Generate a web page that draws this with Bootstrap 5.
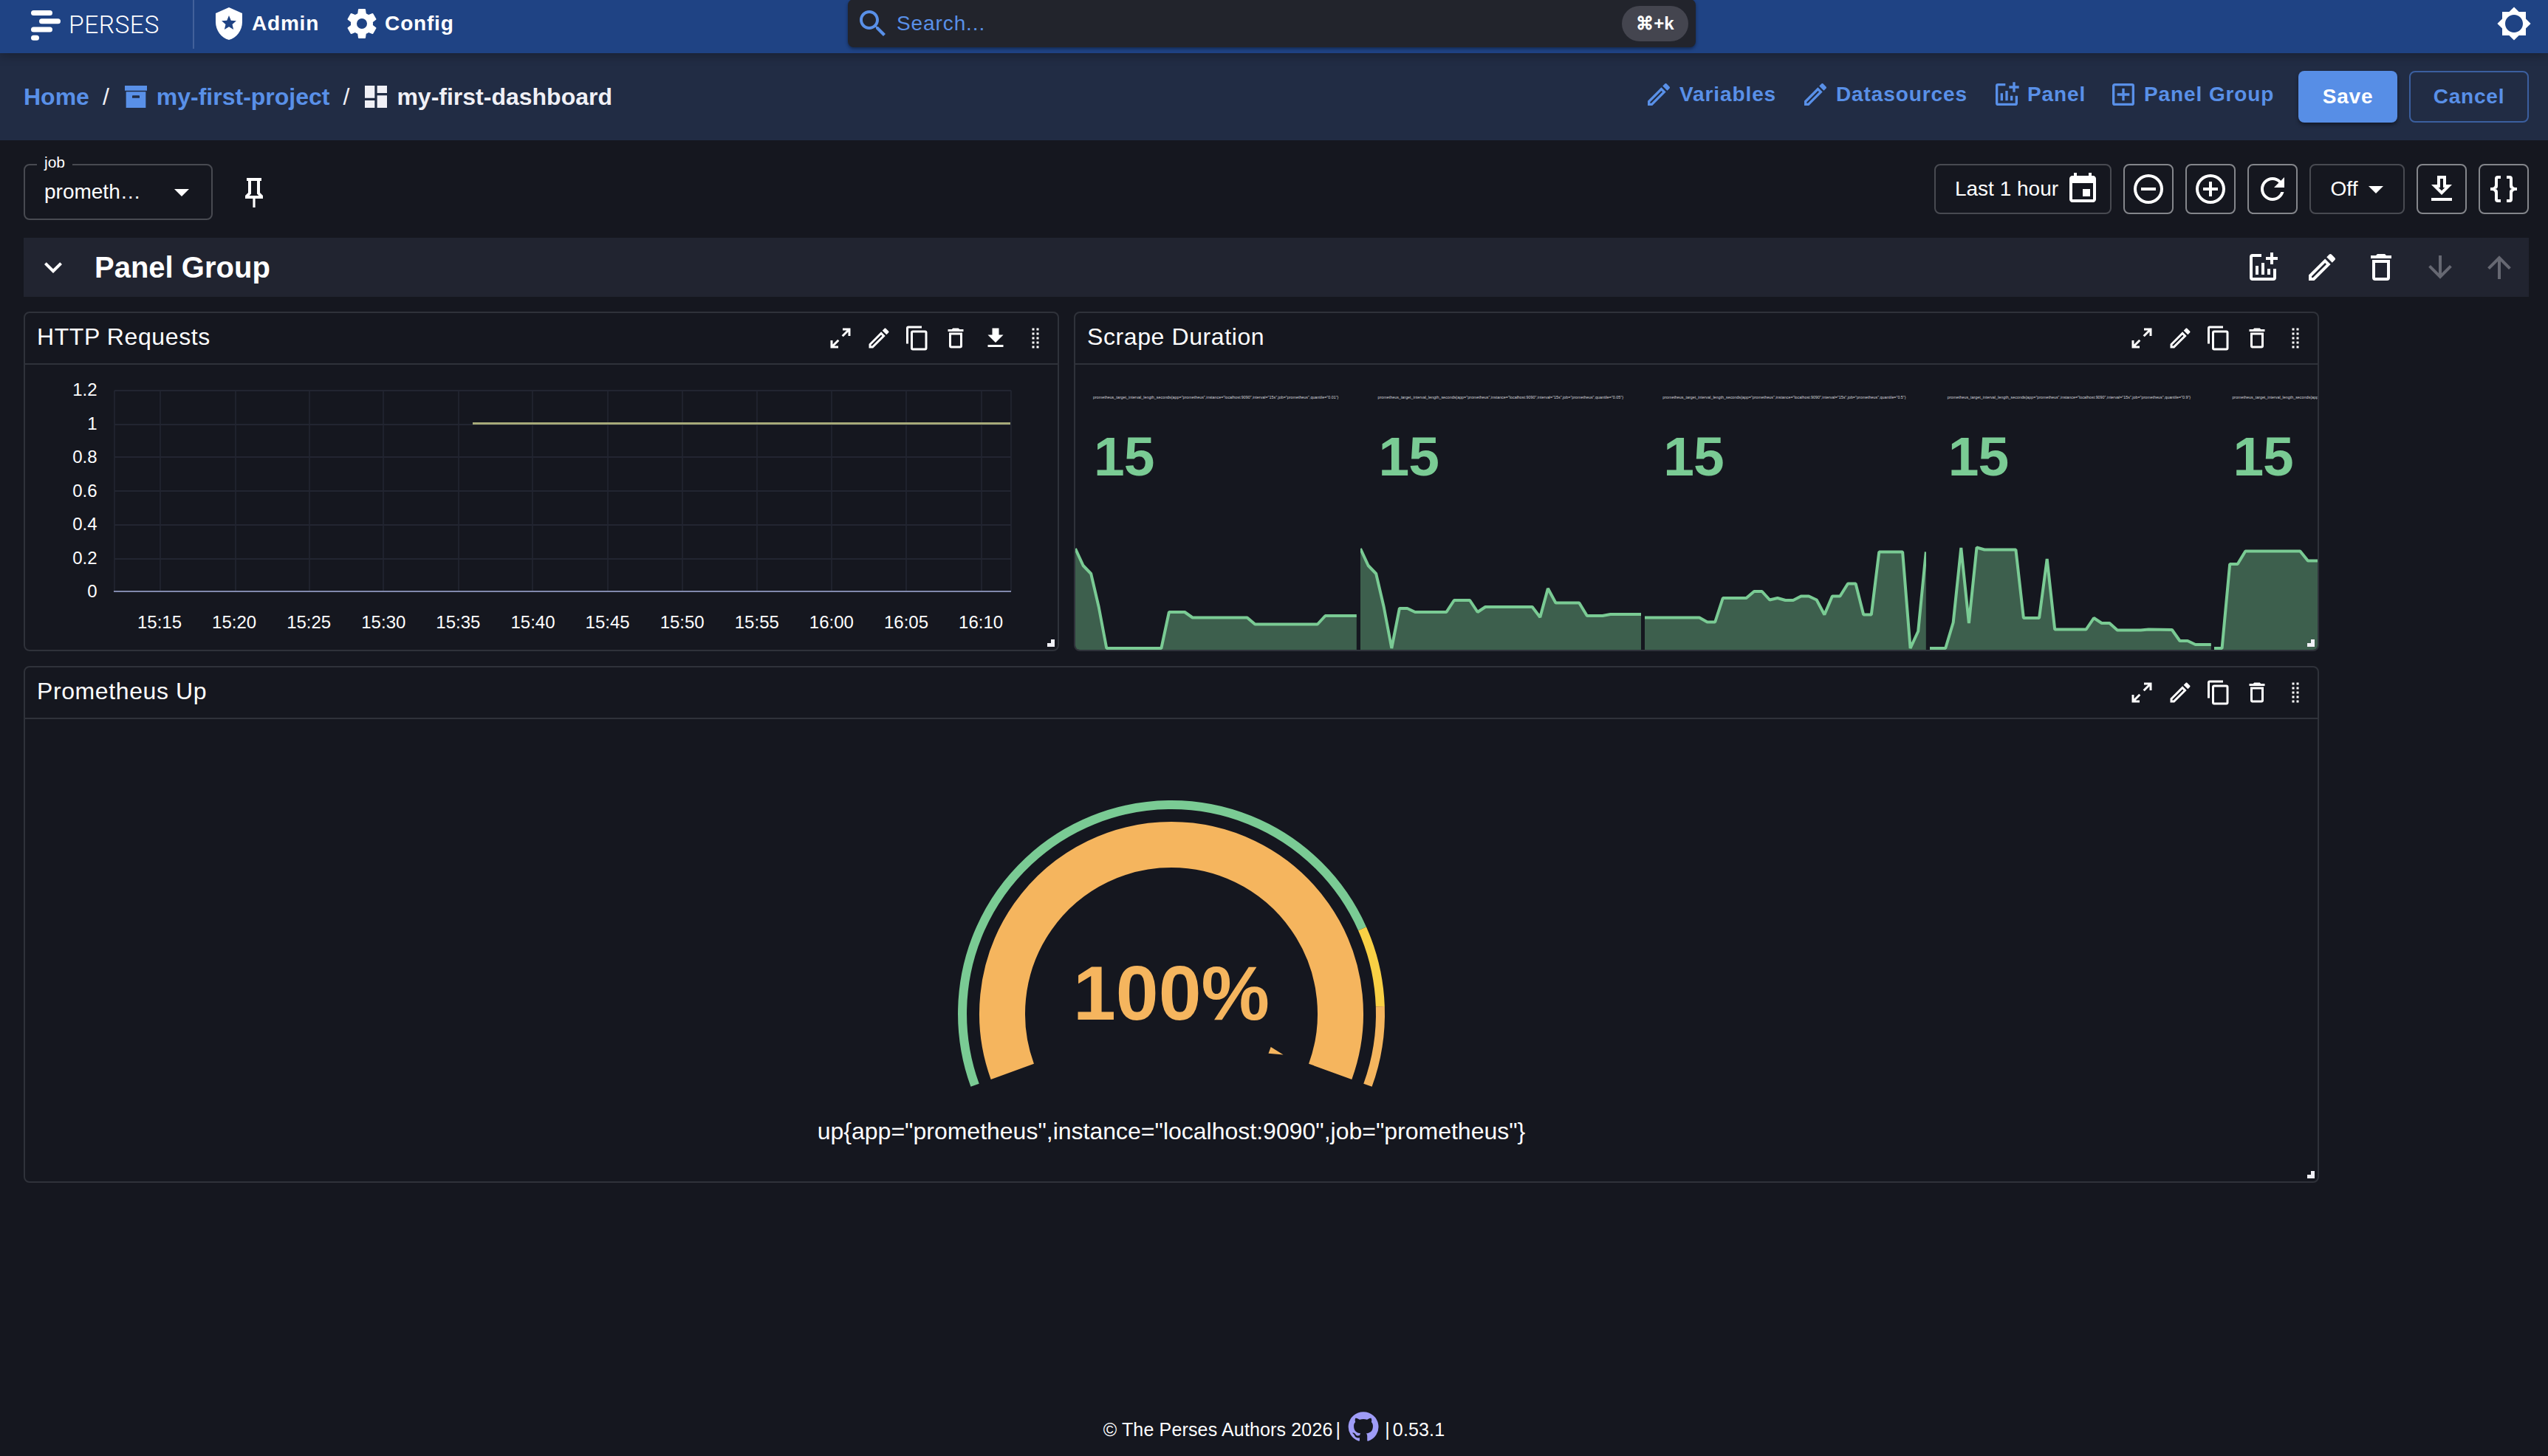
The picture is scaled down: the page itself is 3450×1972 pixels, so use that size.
<!DOCTYPE html>
<html lang="en" data-bs-theme="dark">
<head>
  <meta charset="UTF-8" />
  <meta name="viewport" content="width=device-width, initial-scale=1" />
  <title>my-first-dashboard - Perses</title>

  <!-- Bootstrap CSS -->
  <link href="https://cdn.jsdelivr.net/npm/bootstrap@5.3.3/dist/css/bootstrap.min.css" rel="stylesheet" />

  <style>
    body {
      background-color: #15171f;
      color: #fff;
      font-family: "Liberation Sans", Arial, sans-serif;
      font-size: 28px;
      line-height: 1.2;
      min-height: 100vh;
      overflow: hidden;
    }

    svg {
      display: block;
      flex-shrink: 0;
      fill: currentColor;
    }

    .ic-lg { width: 48px; height: 48px; }
    .ic-md { width: 40px; height: 40px; }
    .ic-sm { width: 36px; height: 36px; }
    .ic-gh { width: 44px; height: 44px; margin: 0 7px 9px 9px; }

    a { text-decoration: none; }

    /* top bar */
    .topbar {
      height: 72px;
      padding: 0 22px 8px 42px;
      background: #1f4384;
      box-shadow: 0 2px 14px rgba(0, 0, 0, .3);
      z-index: 5;
    }

    .brand-link { width: 219px; height: 68px; padding-top: 4px; color: #fff; }
    .brand-logo { width: 40px; height: 41px; }

    .brand-name {
      font-family: Roboto, sans-serif;
      font-weight: 300;
      font-size: 33.5px;
      letter-spacing: .5px;
      margin: 1px 0 0 11px;
    }

    .topbar-rule { width: 2px; height: 68px; margin-right: 23px; background: #42619a; }

    .top-link {
      color: #fff;
      font-weight: bold;
      letter-spacing: .8px;
      gap: 7px;
      margin-right: 34px;
    }

    .top-left { width: 1106px; }

    .search-box {
      width: 1148px;
      height: 65px;
      margin-top: -1px;
      padding: 1px 10px 0;
      background: #22242c;
      color: #5990e8;
      border-radius: 8px;
      box-shadow: 0 2px 4px rgba(0, 0, 0, .4);
    }

    .search-text { margin-left: 8px; letter-spacing: .9px; }

    .key-chip {
      width: 90px;
      height: 48px;
      border-radius: 24px;
      background: #44454f;
      color: #fff;
      font-size: 24px;
      font-weight: bold;
    }

    /* breadcrumbs and edit actions */
    .subbar { height: 118px; padding: 0 26px 0 32px; background: #212c44; }
    .crumbs { font-size: 32px; }
    .crumbs a, .crumb-here { font-weight: bold; }
    .crumbs a { color: #5990e8; }
    .crumbs .crumb-sep { margin: 0 16px 0 18px; color: #f0f0f6; }
    .crumbs svg { margin-right: 8px; }
    .crumb-here { color: #f0f0f6; }

    .edit-link {
      color: #5990e8;
      font-weight: bold;
      letter-spacing: .9px;
      gap: 8px;
      margin-bottom: 6px;
    }

    .w-vars { width: 212px; }
    .w-data { width: 259px; }
    .w-panel { width: 158px; }
    .w-group { width: 257px; }

    .edit-btn {
      height: 70px;
      padding: 0;
      font-size: 28px;
      font-weight: bold;
      letter-spacing: .8px;
      border-radius: 8px;
    }

    .btn-save { width: 134px; background: #578ee6; color: #fff; box-shadow: 0 3px 5px rgba(0, 0, 0, .4); }
    .btn-cancel { width: 162px; margin-left: 16px; color: #5990e8; border: 2px solid #3b5f9f; }

    /* variables and time controls */
    .controls { height: 132px; padding: 32px 26px 0 32px; }

    .var-select {
      width: 256px;
      height: 76px;
      padding: 0 16px 0 26px;
      border: 2px solid #484a51;
      border-radius: 8px;
    }

    .var-label {
      position: absolute;
      top: -17px;
      left: 16px;
      padding: 0 10px;
      background: #15171f;
      font-size: 21px;
      line-height: 26px;
    }

    .pin-icon { margin: 15px 0 0 32px; }

    .ctl {
      height: 68px;
      border: 2px solid #84868b;
      border-radius: 8px;
    }

    .ctl-icon { width: 68px; }
    .ctl-dim { border-color: #484a51; }
    .ctl-range { width: 240px; gap: 9px; padding-left: 13px; }
    .ctl-off { width: 129px; gap: 1px; padding-left: 14px; }

    /* panel group */
    .group-bar {
      height: 80px;
      margin: 0 26px 20px 32px;
      padding: 0 16px;
      background: #212430;
    }

    .group-title { font-size: 40px; font-weight: bold; margin-left: 32px; }
    .group-tools { gap: 32px; }
    .is-off { color: #666872; }

    .panels {
      display: grid;
      grid-template-columns: 1402px 1686px;
      grid-template-rows: 460px 700px;
      gap: 20px;
      margin-left: 32px;
    }

    .panel-box {
      border: 2px solid #2f323a;
      border-radius: 8px;
      overflow: hidden;
    }

    .panel-wide { grid-column: 1 / 3; }

    .panel-head {
      height: 70px;
      padding: 0 12px 0 16px;
      border-bottom: 2px solid #2f323a;
    }

    .panel-name { font-size: 32px; letter-spacing: .6px; padding-bottom: 4px; }
    .panel-tools { gap: 16px; }
    .w-dl { width: 40px; }

    .grip {
      position: absolute;
      right: 4px;
      bottom: 4px;
      width: 10px;
      height: 10px;
      border-right: 5px solid #f0f0f6;
      border-bottom: 5px solid #f0f0f6;
    }

    /* stat cells */
    .stats { gap: 4.8px; height: 386px; }
    .stat-cell { flex: 0 0 380.8px; width: 380.8px; }
    .stat-label { font-size: 5.37px; line-height: 8px; color: #d4d4da; margin: 40px 0 0 24px; white-space: nowrap; }
    .stat-value { font-size: 75px; line-height: 76px; font-weight: bold; color: #7acb94; margin: 38px 0 0 25px; letter-spacing: -1px; }

    .chart-text text { fill: #fff; font-size: 24px; }

    footer { height: 72px; font-size: 25px; letter-spacing: .15px; }
  </style>
</head>
<body class="d-flex flex-column">

  <!-- icon shapes -->
  <svg class="d-none" xmlns="http://www.w3.org/2000/svg">
    <symbol id="shield" viewBox="0 0 24 24"><path d="M12,1L3,5V11C3,16.55 6.84,21.74 12,23C17.16,21.74 21,16.55 21,11V5L12,1M15.08,16L12,14.15L8.93,16L9.74,12.5L7.03,10.16L10.61,9.85L12,6.55L13.39,9.84L16.97,10.15L14.26,12.5L15.08,16Z"/></symbol>
    <symbol id="cog" viewBox="0 0 24 24"><path d="M12,15.5A3.5,3.5 0 0,1 8.5,12A3.5,3.5 0 0,1 12,8.5A3.5,3.5 0 0,1 15.5,12A3.5,3.5 0 0,1 12,15.5M19.43,12.97C19.47,12.65 19.5,12.33 19.5,12C19.5,11.67 19.47,11.34 19.43,11L21.54,9.37C21.73,9.22 21.78,8.95 21.66,8.73L19.66,5.27C19.54,5.05 19.27,4.96 19.05,5.05L16.56,6.05C16.04,5.66 15.5,5.32 14.87,5.07L14.5,2.42C14.46,2.18 14.25,2 14,2H10C9.75,2 9.54,2.18 9.5,2.42L9.13,5.07C8.5,5.32 7.96,5.66 7.44,6.05L4.95,5.05C4.73,4.96 4.46,5.05 4.34,5.27L2.34,8.73C2.21,8.95 2.27,9.22 2.46,9.37L4.57,11C4.53,11.34 4.5,11.67 4.5,12C4.5,12.33 4.53,12.65 4.57,12.97L2.46,14.63C2.27,14.78 2.21,15.05 2.34,15.27L4.34,18.73C4.46,18.95 4.73,19.03 4.95,18.95L7.44,17.94C7.96,18.34 8.5,18.68 9.13,18.93L9.5,21.58C9.54,21.82 9.75,22 10,22H14C14.25,22 14.46,21.82 14.5,21.58L14.87,18.93C15.5,18.67 16.04,18.34 16.56,17.94L19.05,18.95C19.27,19.03 19.54,18.95 19.66,18.73L21.66,15.27C21.78,15.05 21.73,14.78 21.54,14.63L19.43,12.97Z"/></symbol>
    <symbol id="search" viewBox="0 0 24 24"><path d="M15.5 14h-.79l-.28-.27C15.41 12.59 16 11.11 16 9.5 16 5.91 13.09 3 9.5 3S3 5.91 3 9.5 5.91 16 9.5 16c1.61 0 3.09-.59 4.23-1.57l.27.28v.79l5 4.99L20.49 19zm-6 0C7.01 14 5 11.99 5 9.5S7.01 5 9.5 5 14 7.01 14 9.5 11.99 14 9.5 14"/></symbol>
    <symbol id="sun" viewBox="0 0 24 24"><path d="M20 15.31 23.31 12 20 8.69V4h-4.69L12 .69 8.69 4H4v4.69L.69 12 4 15.31V20h4.69L12 23.31 15.31 20H20zM12 18c-3.31 0-6-2.69-6-6s2.69-6 6-6 6 2.69 6 6-2.69 6-6 6"/></symbol>
    <symbol id="archive" viewBox="0 0 24 24"><path d="M3,3H21V7H3V3M4,8H20V21H4V8M9.5,11A0.5,0.5 0 0,0 9,11.5V13H15V11.5A0.5,0.5 0 0,0 14.5,11H9.5Z"/></symbol>
    <symbol id="board" viewBox="0 0 24 24"><path d="M13,3V9H21V3M13,21H21V11H13M3,21H11V15H3M3,13H11V3H3V13Z"/></symbol>
    <symbol id="pencil" viewBox="0 0 24 24"><path d="M14.06,9L15,9.94L5.92,19H5V18.08L14.06,9M17.66,3C17.41,3 17.15,3.1 16.96,3.29L15.13,5.12L18.88,8.87L20.71,7.04C21.1,6.65 21.1,6 20.71,5.63L18.37,3.29C18.17,3.09 17.92,3 17.66,3M14.06,6.19L3,17.25V21H6.75L17.81,9.94L14.06,6.19Z"/></symbol>
    <symbol id="chart-plus" viewBox="0 0 24 24"><path d="M5 3h6v2H5v14h14v-6h2v6a2 2 0 0 1-2 2H5a2 2 0 0 1-2-2V5a2 2 0 0 1 2-2zM7 11h2v6H7zM11 9h2v8h-2zM15 13h2v4h-2zM17 2h2v3h3v2h-3v3h-2V7h-3V5h3z"/></symbol>
    <symbol id="plus-box" viewBox="0 0 24 24"><path d="M19,19V5H5V19H19M19,3A2,2 0 0,1 21,5V19A2,2 0 0,1 19,21H5A2,2 0 0,1 3,19V5C3,3.89 3.9,3 5,3H19M11,7H13V11H17V13H13V17H11V13H7V11H11V7Z"/></symbol>
    <symbol id="caret" viewBox="0 0 24 24"><path d="m7 10 5 5 5-5z"/></symbol>
    <symbol id="pin" viewBox="0 0 24 24"><path d="M16,12V4H17V2H7V4H8V12L6,14V16H11.2V22H12.8V16H18V14L16,12M8.8,14L10,12.8V4H14V12.8L15.2,14H8.8Z"/></symbol>
    <symbol id="calendar" viewBox="0 0 24 24"><path d="M17 12h-5v5h5zM16 1v2H8V1H6v2H5c-1.11 0-1.99.9-1.99 2L3 19c0 1.1.89 2 2 2h14c1.1 0 2-.9 2-2V5c0-1.1-.9-2-2-2h-1V1zm3 18H5V8h14z"/></symbol>
    <symbol id="minus-circle" viewBox="0 0 24 24"><path d="M12,20C7.59,20 4,16.41 4,12C4,7.59 7.59,4 12,4C16.41,4 20,7.59 20,12C20,16.41 16.41,20 12,20M12,2A10,10 0 0,0 2,12A10,10 0 0,0 12,22A10,10 0 0,0 22,12A10,10 0 0,0 12,2M7,13H17V11H7"/></symbol>
    <symbol id="plus-circle" viewBox="0 0 24 24"><path d="M12,20C7.59,20 4,16.41 4,12C4,7.59 7.59,4 12,4C16.41,4 20,7.59 20,12C20,16.41 16.41,20 12,20M12,2A10,10 0 0,0 2,12A10,10 0 0,0 12,22A10,10 0 0,0 22,12A10,10 0 0,0 12,2M13,7H11V11H7V13H11V17H13V13H17V11H13V7Z"/></symbol>
    <symbol id="refresh" viewBox="0 0 24 24"><path d="M17.65,6.35C16.2,4.9 14.21,4 12,4A8,8 0 0,0 4,12A8,8 0 0,0 12,20C15.73,20 18.84,17.45 19.73,14H17.65C16.83,16.33 14.61,18 12,18A6,6 0 0,1 6,12A6,6 0 0,1 12,6C13.66,6 15.14,6.69 16.22,7.78L13,11H20V4L17.65,6.35Z"/></symbol>
    <symbol id="download-o" viewBox="0 0 24 24"><path d="M13,5V11H14.17L12,13.17L9.83,11H11V5H13M15,3H9V9H5L12,16L19,9H15V3M19,18H5V20H19V18Z"/></symbol>
    <symbol id="download" viewBox="0 0 24 24"><path d="M5,20H19V18H5M19,9H15V3H9V9H5L12,16L19,9Z"/></symbol>
    <symbol id="braces" viewBox="0 0 24 24"><path d="M8,3A2,2 0 0,0 6,5V9A2,2 0 0,1 4,11H3V13H4A2,2 0 0,1 6,15V19A2,2 0 0,0 8,21H10V19H8V14A2,2 0 0,0 6,12A2,2 0 0,0 8,10V5H10V3M16,3A2,2 0 0,1 18,5V9A2,2 0 0,0 20,11H21V13H20A2,2 0 0,0 18,15V19A2,2 0 0,1 16,21H14V19H16V14A2,2 0 0,1 18,12A2,2 0 0,1 16,10V5H14V3H16Z"/></symbol>
    <symbol id="chevron" viewBox="0 0 24 24"><path d="M7.41,8.58L12,13.17L16.59,8.58L18,10L12,16L6,10L7.41,8.58Z"/></symbol>
    <symbol id="trash" viewBox="0 0 24 24"><path d="M6,19A2,2 0 0,0 8,21H16A2,2 0 0,0 18,19V7H6V19M8,9H16V19H8V9M15.5,4L14.5,3H9.5L8.5,4H5V6H19V4H15.5Z"/></symbol>
    <symbol id="arrow-down" viewBox="0 0 24 24"><path d="M11,4H13V16L18.5,10.5L19.92,11.92L12,19.84L4.08,11.92L5.5,10.5L11,16V4Z"/></symbol>
    <symbol id="arrow-up" viewBox="0 0 24 24"><path d="M13,20H11V8L5.5,13.5L4.08,12.08L12,4.16L19.92,12.08L18.5,13.5L13,8V20Z"/></symbol>
    <symbol id="expand" viewBox="0 0 24 24"><path d="M10,21V19H6.41L10.91,14.5L9.5,13.09L5,17.59V14H3V21H10M14.5,10.91L19,6.41V10H21V3H14V5H17.59L13.09,9.5L14.5,10.91Z"/></symbol>
    <symbol id="copy" viewBox="0 0 24 24"><path d="M19,21H8V7H19M19,5H8A2,2 0 0,0 6,7V21A2,2 0 0,0 8,23H19A2,2 0 0,0 21,21V7A2,2 0 0,0 19,5M16,1H4A2,2 0 0,0 2,3V17H4V3H16V1Z"/></symbol>
    <symbol id="drag" viewBox="0 0 24 24"><path d="M9 3h2v2H9zM13 3h2v2h-2zM9 7h2v2H9zM13 7h2v2h-2zM9 11h2v2H9zM13 11h2v2h-2zM9 15h2v2H9zM13 15h2v2h-2zM9 19h2v2H9zM13 19h2v2h-2z"/></symbol>
    <symbol id="github" viewBox="0 0 24 24"><path d="M12 1.27a11 11 0 00-3.48 21.46c.55.09.73-.28.73-.55v-1.84c-3.03.64-3.67-1.46-3.67-1.46-.55-1.29-1.28-1.65-1.28-1.65-.92-.65.1-.65.1-.65 1.1 0 1.73 1.1 1.73 1.1.92 1.65 2.57 1.2 3.21.92a2 2 0 01.64-1.47c-2.47-.27-5.04-1.19-5.04-5.5 0-1.1.46-2.1 1.2-2.84a3.76 3.76 0 010-2.93s.91-.28 3.11 1.1c1.8-.49 3.7-.49 5.5 0 2.1-1.38 3.02-1.1 3.02-1.1a3.76 3.76 0 01.1 2.93c.83.74 1.2 1.74 1.2 2.94 0 4.21-2.57 5.13-5.04 5.4.45.37.82.92.82 2.02v3.03c0 .27.1.64.73.55A11 11 0 0012 1.27"/></symbol>
  </svg>

  <header class="topbar d-flex position-relative">
    <div class="top-left d-flex align-items-center">
      <a class="brand-link d-flex align-items-center" href="#">
        <svg class="brand-logo" viewBox="0 0 40 41">
          <rect x="0" y="0" width="29" height="7" rx="3.5"/>
          <rect x="11" y="11.3" width="29" height="7" rx="3.5"/>
          <rect x="0" y="22.6" width="29" height="7" rx="3.5"/>
          <rect x="0" y="33.8" width="11" height="7" rx="3.5"/>
        </svg>
        <span class="brand-name">PERSES</span>
      </a>
      <div class="topbar-rule"></div>
      <a class="top-link d-flex align-items-center" href="#"><svg class="ic-lg"><use href="#shield"/></svg>Admin</a>
      <a class="top-link d-flex align-items-center" href="#"><svg class="ic-lg"><use href="#cog"/></svg>Config</a>
    </div>
    <div class="search-box d-flex align-items-center">
      <svg class="ic-lg"><use href="#search"/></svg>
      <span class="search-text">Search...</span>
      <span class="key-chip d-flex align-items-center justify-content-center ms-auto">⌘+k</span>
    </div>
    <div class="d-flex align-items-center ms-auto"><svg class="ic-lg"><use href="#sun"/></svg></div>
  </header>

  <div class="subbar d-flex align-items-center">
    <nav class="crumbs d-flex align-items-center">
      <a href="#">Home</a>
      <span class="crumb-sep">/</span>
      <a class="d-flex align-items-center" href="#"><svg class="ic-md"><use href="#archive"/></svg>my-first-project</a>
      <span class="crumb-sep">/</span>
      <span class="crumb-here d-flex align-items-center"><svg class="ic-md"><use href="#board"/></svg>my-first-dashboard</span>
    </nav>
    <div class="d-flex align-items-center ms-auto">
      <a class="edit-link w-vars d-flex align-items-center" href="#"><svg class="ic-md"><use href="#pencil"/></svg>Variables</a>
      <a class="edit-link w-data d-flex align-items-center" href="#"><svg class="ic-md"><use href="#pencil"/></svg>Datasources</a>
      <a class="edit-link w-panel d-flex align-items-center" href="#"><svg class="ic-md"><use href="#chart-plus"/></svg>Panel</a>
      <a class="edit-link w-group d-flex align-items-center text-nowrap" href="#"><svg class="ic-md"><use href="#plus-box"/></svg>Panel Group</a>
      <button class="btn edit-btn btn-save" type="button">Save</button>
      <button class="btn edit-btn btn-cancel" type="button">Cancel</button>
    </div>
  </div>

  <div class="controls d-flex align-items-start">
    <div class="var-select position-relative d-flex align-items-center justify-content-between">
      <span class="var-label">job</span>
      <span>prometh…</span>
      <svg class="ic-lg"><use href="#caret"/></svg>
    </div>
    <svg class="ic-lg pin-icon"><use href="#pin"/></svg>
    <div class="d-flex gap-3 ms-auto">
      <div class="ctl ctl-dim ctl-range d-flex align-items-center justify-content-center">Last 1 hour<svg class="ic-lg"><use href="#calendar"/></svg></div>
      <div class="ctl ctl-icon d-flex align-items-center justify-content-center"><svg class="ic-lg"><use href="#minus-circle"/></svg></div>
      <div class="ctl ctl-icon d-flex align-items-center justify-content-center"><svg class="ic-lg"><use href="#plus-circle"/></svg></div>
      <div class="ctl ctl-icon d-flex align-items-center justify-content-center"><svg class="ic-lg"><use href="#refresh"/></svg></div>
      <div class="ctl ctl-dim ctl-off d-flex align-items-center justify-content-center">Off<svg class="ic-lg"><use href="#caret"/></svg></div>
      <div class="ctl ctl-icon d-flex align-items-center justify-content-center"><svg class="ic-lg"><use href="#download-o"/></svg></div>
      <div class="ctl ctl-icon d-flex align-items-center justify-content-center"><svg class="ic-lg"><use href="#braces"/></svg></div>
    </div>
  </div>

  <div class="group-bar d-flex align-items-center">
    <svg class="ic-lg"><use href="#chevron"/></svg>
    <span class="group-title">Panel Group</span>
    <div class="group-tools d-flex ms-auto">
      <svg class="ic-lg"><use href="#chart-plus"/></svg>
      <svg class="ic-lg"><use href="#pencil"/></svg>
      <svg class="ic-lg"><use href="#trash"/></svg>
      <svg class="ic-lg is-off"><use href="#arrow-down"/></svg>
      <svg class="ic-lg is-off"><use href="#arrow-up"/></svg>
    </div>
  </div>

  <main class="panels">
    <section class="panel-box position-relative">
      <div class="panel-head d-flex align-items-center justify-content-between">
        <span class="panel-name">HTTP Requests</span>
        <div class="panel-tools d-flex">
          <svg class="ic-sm"><use href="#expand"/></svg>
          <svg class="ic-sm"><use href="#pencil"/></svg>
          <svg class="ic-sm"><use href="#copy"/></svg>
          <svg class="ic-sm"><use href="#trash"/></svg>
          <svg class="ic-sm w-dl"><use href="#download"/></svg>
          <svg class="ic-sm"><use href="#drag"/></svg>
        </div>
      </div>
      <svg id="requestsChart" class="chart-text" width="1398" height="386" viewBox="0 0 1398 386"></svg>
      <span class="grip"></span>
    </section>

    <section class="panel-box position-relative">
      <div class="panel-head d-flex align-items-center justify-content-between">
        <span class="panel-name">Scrape Duration</span>
        <div class="panel-tools d-flex">
          <svg class="ic-sm"><use href="#expand"/></svg>
          <svg class="ic-sm"><use href="#pencil"/></svg>
          <svg class="ic-sm"><use href="#copy"/></svg>
          <svg class="ic-sm"><use href="#trash"/></svg>
          <svg class="ic-sm"><use href="#drag"/></svg>
        </div>
      </div>
      <div id="stats" class="stats d-flex"></div>
      <span class="grip"></span>
    </section>

    <section class="panel-box panel-wide position-relative">
      <div class="panel-head d-flex align-items-center justify-content-between">
        <span class="panel-name">Prometheus Up</span>
        <div class="panel-tools d-flex">
          <svg class="ic-sm"><use href="#expand"/></svg>
          <svg class="ic-sm"><use href="#pencil"/></svg>
          <svg class="ic-sm"><use href="#copy"/></svg>
          <svg class="ic-sm"><use href="#trash"/></svg>
          <svg class="ic-sm"><use href="#drag"/></svg>
        </div>
      </div>
      <svg id="gauge" width="3104" height="626" viewBox="0 0 3104 626"></svg>
      <span class="grip"></span>
    </section>
  </main>

  <footer class="d-flex align-items-center justify-content-center mt-auto">
    <span>© The Perses Authors 2026</span>
    <span class="ms-1">|</span>
    <svg class="ic-gh" color="#9f9cf7"><use href="#github"/></svg>
    <span class="me-1">|</span>
    <span>0.53.1</span>
  </footer>

  <!-- Bootstrap JS Bundle -->
  <script src="https://cdn.jsdelivr.net/npm/bootstrap@5.3.3/dist/js/bootstrap.bundle.min.js"></script>

  <script>
    // time series panel
    function drawRequests() {
      const left = 121, right = 1335, top = 35, bottom = 307;
      const xs = [183, 285, 385, 485, 587, 687, 789, 890, 991, 1092, 1193, 1295];
      const times = ['15:15', '15:20', '15:25', '15:30', '15:35', '15:40', '15:45', '15:50', '15:55', '16:00', '16:05', '16:10'];
      const rows = [[35, '1.2'], [81, '1'], [125, '0.8'], [171, '0.6'], [217, '0.4'], [263, '0.2'], [307, '0']];
      let out = '';

      [left, ...xs, right].forEach(x => {
        out += `<path d="M${x} ${top}V${bottom}" stroke="#1f222d" stroke-width="2"/>`;
      });
      rows.forEach(([y, label], i) => {
        if (label !== '0') out += `<path d="M${left} ${y}H${right}" stroke="#222531" stroke-width="2"/>`;
        out += `<text x="97.5" y="${35 + i * 45.5 + 7}" text-anchor="end">${label}</text>`;
      });
      times.forEach((t, i) => {
        out += `<text x="${182 + i * 101.1}" y="357" text-anchor="middle">${t}</text>`;
      });
      out += `<path d="M120 ${bottom}H1335" stroke="#8189ad" stroke-width="2"/>`;
      out += `<path d="M606 79.5H1334" stroke="#a7aa79" stroke-width="3"/>`;
      document.getElementById('requestsChart').innerHTML = out;
    }

    // each series is a list of [sample index, y], 37 samples per cell
    const series = [
      { q: '0.01', pts: [[0, 9], [1, 32], [2, 43], [3, 88], [4, 144], [11, 144], [12, 95], [14, 95], [15, 102.5], [22, 102.5], [23, 111.5], [31, 111.5], [32, 100], [36, 100]] },
      { q: '0.05', pts: [[0, 9], [1, 32], [2, 43], [3, 88], [4, 144], [5, 90], [6, 90], [7, 95], [11, 95], [12, 79], [14, 79], [15, 95], [16, 88], [22, 88], [23, 102], [24, 63], [25, 82.5], [28, 82.5], [29, 100], [31, 100], [32, 98], [36, 98]] },
      { q: '0.5', pts: [[0, 102.5], [7, 102.5], [8, 108.5], [9, 108.5], [10, 76], [13, 76], [14, 67], [15, 67], [16, 78.5], [17, 76], [18, 79], [19, 79], [20, 73.5], [21, 73.5], [22, 78.5], [23, 98.5], [24, 73.5], [25, 73.5], [26, 56.5], [27, 56.5], [28, 98.5], [29, 98.5], [30, 13.5], [33, 13.5], [34, 144], [35, 121], [36, 13.5]] },
      { q: '0.9', pts: [[0, 144], [2, 144], [3, 109], [4, 8], [5, 110], [6, 7.5], [7, 10.5], [11, 10.5], [12, 103], [14, 103], [15, 23], [16, 118.5], [20, 118.5], [21, 103], [22, 110], [23, 110], [24, 119.5], [27, 119.5], [28, 118.5], [31, 119], [32, 134], [33, 134], [34, 139], [36, 139]] },
      { q: '0.99', pts: [[0, 144], [1, 144], [2, 30], [3, 30], [4, 12.5], [11, 12.5], [12, 25.5], [36, 25.5]] }
    ];

    function drawStats() {
      const w = 380.8, h = 146;
      document.getElementById('stats').innerHTML = series.map(s => {
        const line = s.pts.map(([i, y]) => `${(i * w / 36).toFixed(1)},${y}`).join(' ');
        return `
          <div class="stat-cell d-flex flex-column">
            <div class="stat-label">prometheus_target_interval_length_seconds{app="prometheus",instance="localhost:9090",interval="15s",job="prometheus",quantile="${s.q}"}</div>
            <div class="stat-value">15</div>
            <svg class="mt-auto" width="${w}" height="${h}" viewBox="0 0 ${w} ${h}">
              <polygon points="0,${h} ${line} ${w},${h}" fill="#3d5f4d"/>
              <polyline points="${line}" fill="none" stroke="#7acb94" stroke-width="4" stroke-linejoin="bevel"/>
            </svg>
          </div>`;
      }).join('');
    }

    // ring segment between two angles in degrees, clockwise from a to b
    function ring(cx, cy, r, width, a, b, color) {
      const mid = r - width / 2;
      const pt = deg => {
        const t = deg * Math.PI / 180;
        return `${(cx + mid * Math.cos(t)).toFixed(2)} ${(cy - mid * Math.sin(t)).toFixed(2)}`;
      };
      const large = a - b > 180 ? 1 : 0;
      return `<path d="M${pt(a)}A${mid} ${mid} 0 ${large} 1 ${pt(b)}" fill="none" stroke="${color}" stroke-width="${width}"/>`;
    }

    function drawGauge() {
      const cx = 1552, cy = 399;
      document.getElementById('gauge').innerHTML =
        ring(cx, cy, 289, 12, 200, 24, '#7acb94') +
        ring(cx, cy, 289, 12, 24, 2, '#f9d045') +
        ring(cx, cy, 289, 12, 2, -20, '#f5b55e') +
        ring(cx, cy, 260, 62, 200, -20, '#f5b55e') +
        '<path d="M1686.7 443.9L1683.5 452.8L1703.6 454.6Z" fill="#f5b55e"/>' +
        `<text x="${cx}" y="407" text-anchor="middle" font-size="104" font-weight="bold" fill="#f5b55e">100%</text>` +
        `<text x="${cx}" y="568.5" text-anchor="middle" font-size="32" fill="#fff">up{app="prometheus",instance="localhost:9090",job="prometheus"}</text>`;
    }

    drawRequests();
    drawStats();
    drawGauge();
  </script>

</body>
</html>
